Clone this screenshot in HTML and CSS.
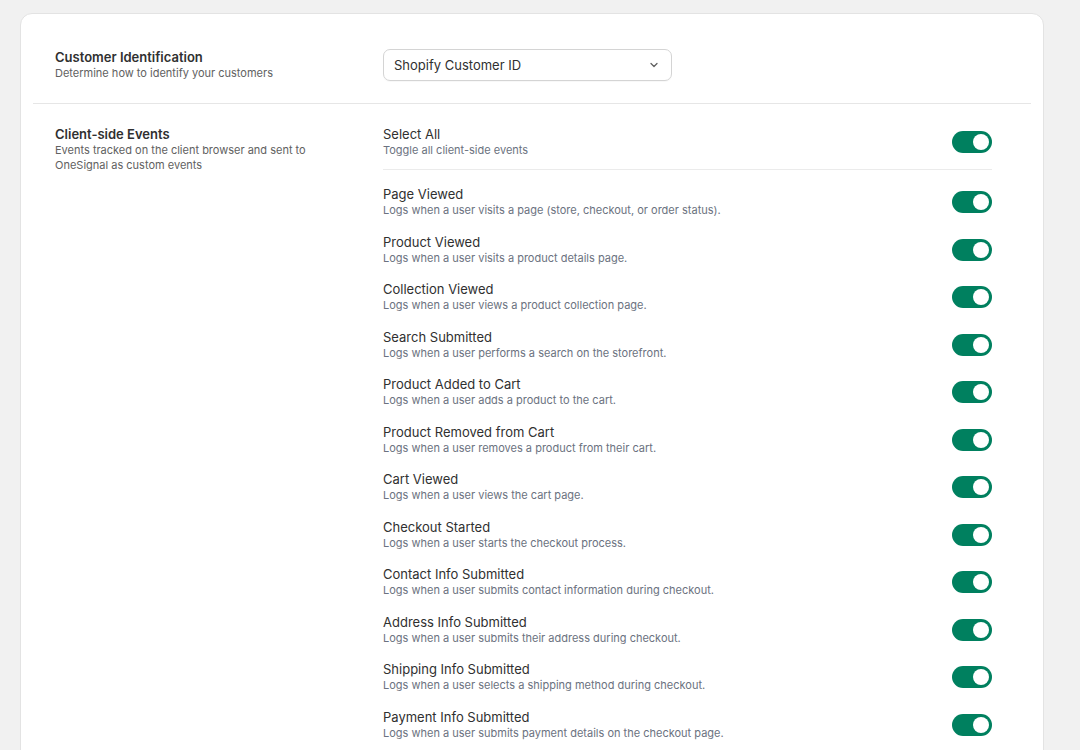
FILE: index.html
```html
<!DOCTYPE html>
<html lang="en">
<head>
    <meta charset="UTF-8">
    <meta name="viewport" content="width=device-width, initial-scale=1.0">
    <title>Settings</title>
    <link rel="stylesheet" href="styles.css">
</head>
<body>
    <div class="card">
        <div class="section">
            <div class="section-info">
                <p class="section-title">Customer Identification</p>
                <p class="section-desc">Determine how to identify your customers</p>
            </div>
            <div class="section-body">
                <div class="select">
                    <span>Shopify Customer ID</span>
                    <svg width="12" height="12" viewBox="0 0 12 12" fill="none">
                        <path d="M3 4.5L6 7.5L9 4.5" stroke="#616161" stroke-width="1.3" stroke-linecap="round" stroke-linejoin="round"/>
                    </svg>
                </div>
            </div>
        </div>

        <div class="section">
            <div class="section-info">
                <p class="section-title">Client-side Events</p>
                <p class="section-desc">Events tracked on the client browser and sent to OneSignal as custom events</p>
            </div>
            <div class="section-body">
                <div class="event select-all">
                    <div>
                        <p class="event-title">Select All</p>
                        <p class="event-desc">Toggle all client-side events</p>
                    </div>
                    <span class="toggle"></span>
                </div>
                <div class="event-list" id="event-list"></div>
            </div>
        </div>
    </div>

    <script>
        const events = [
            ['Page Viewed', 'Logs when a user visits a page (store, checkout, or order status).'],
            ['Product Viewed', 'Logs when a user visits a product details page.'],
            ['Collection Viewed', 'Logs when a user views a product collection page.'],
            ['Search Submitted', 'Logs when a user performs a search on the storefront.'],
            ['Product Added to Cart', 'Logs when a user adds a product to the cart.'],
            ['Product Removed from Cart', 'Logs when a user removes a product from their cart.'],
            ['Cart Viewed', 'Logs when a user views the cart page.'],
            ['Checkout Started', 'Logs when a user starts the checkout process.'],
            ['Contact Info Submitted', 'Logs when a user submits contact information during checkout.'],
            ['Address Info Submitted', 'Logs when a user submits their address during checkout.'],
            ['Shipping Info Submitted', 'Logs when a user selects a shipping method during checkout.'],
            ['Payment Info Submitted', 'Logs when a user submits payment details on the checkout page.']
        ];

        const list = document.getElementById('event-list');
        events.forEach(([title, desc]) => {
            list.innerHTML += `
                <div class="event">
                    <div>
                        <p class="event-title">${title}</p>
                        <p class="event-desc">${desc}</p>
                    </div>
                    <span class="toggle"></span>
                </div>
            `;
        });
    </script>
</body>
</html>
```

FILE: styles.css
```css
body {
    font-family: Inter, "Noto Sans", sans-serif;
    margin: 0;
    padding: 13px 36px 40px 20px;
    background-color: #f1f1f1;
    color: #303030;
}

p {
    margin: 0;
}

.card {
    background: white;
    border: 1px solid #e3e3e3;
    border-radius: 12px;
    padding: 13px 12px;
    box-shadow: 0 1px 0 rgba(0,0,0,0.04);
}

.section {
    display: grid;
    grid-template-columns: 328px 1fr;
    padding: 22px 39px 22px 22px;
    align-items: start;
}

.section + .section {
    border-top: 1px solid #e6e6e6;
}

.section-info {
    max-width: 262px;
}

.section-title {
    font-size: 13px;
    line-height: 17px;
    font-weight: 600;
}

.section-desc {
    font-size: 11px;
    line-height: 15px;
    color: #616161;
}

.select {
    width: 266px;
    height: 30px;
    border: 1px solid #d4d4d4;
    border-radius: 7px;
    display: flex;
    align-items: center;
    justify-content: space-between;
    padding: 0 11px 0 10px;
    font-size: 13px;
    font-weight: 400;
    color: #303030;
    box-shadow: 0 1px 1px rgba(0,0,0,0.03);
}

.event {
    display: flex;
    align-items: center;
    justify-content: space-between;
}

.select-all {
    padding-bottom: 11px;
    border-bottom: 1px solid #ebebeb;
}

.event-list {
    display: flex;
    flex-direction: column;
    gap: 15.5px;
    padding-top: 16px;
}

.event-title {
    font-size: 13px;
    line-height: 17px;
    color: #303030;
}

.event-desc {
    font-size: 11px;
    line-height: 15px;
    color: #6b7280;
}

.toggle {
    position: relative;
    width: 40px;
    height: 22px;
    border-radius: 11px;
    background-color: #00805f;
    flex-shrink: 0;
}

.toggle::after {
    content: '';
    position: absolute;
    top: 3px;
    right: 3px;
    width: 16px;
    height: 16px;
    border-radius: 50%;
    background: white;
}
```
